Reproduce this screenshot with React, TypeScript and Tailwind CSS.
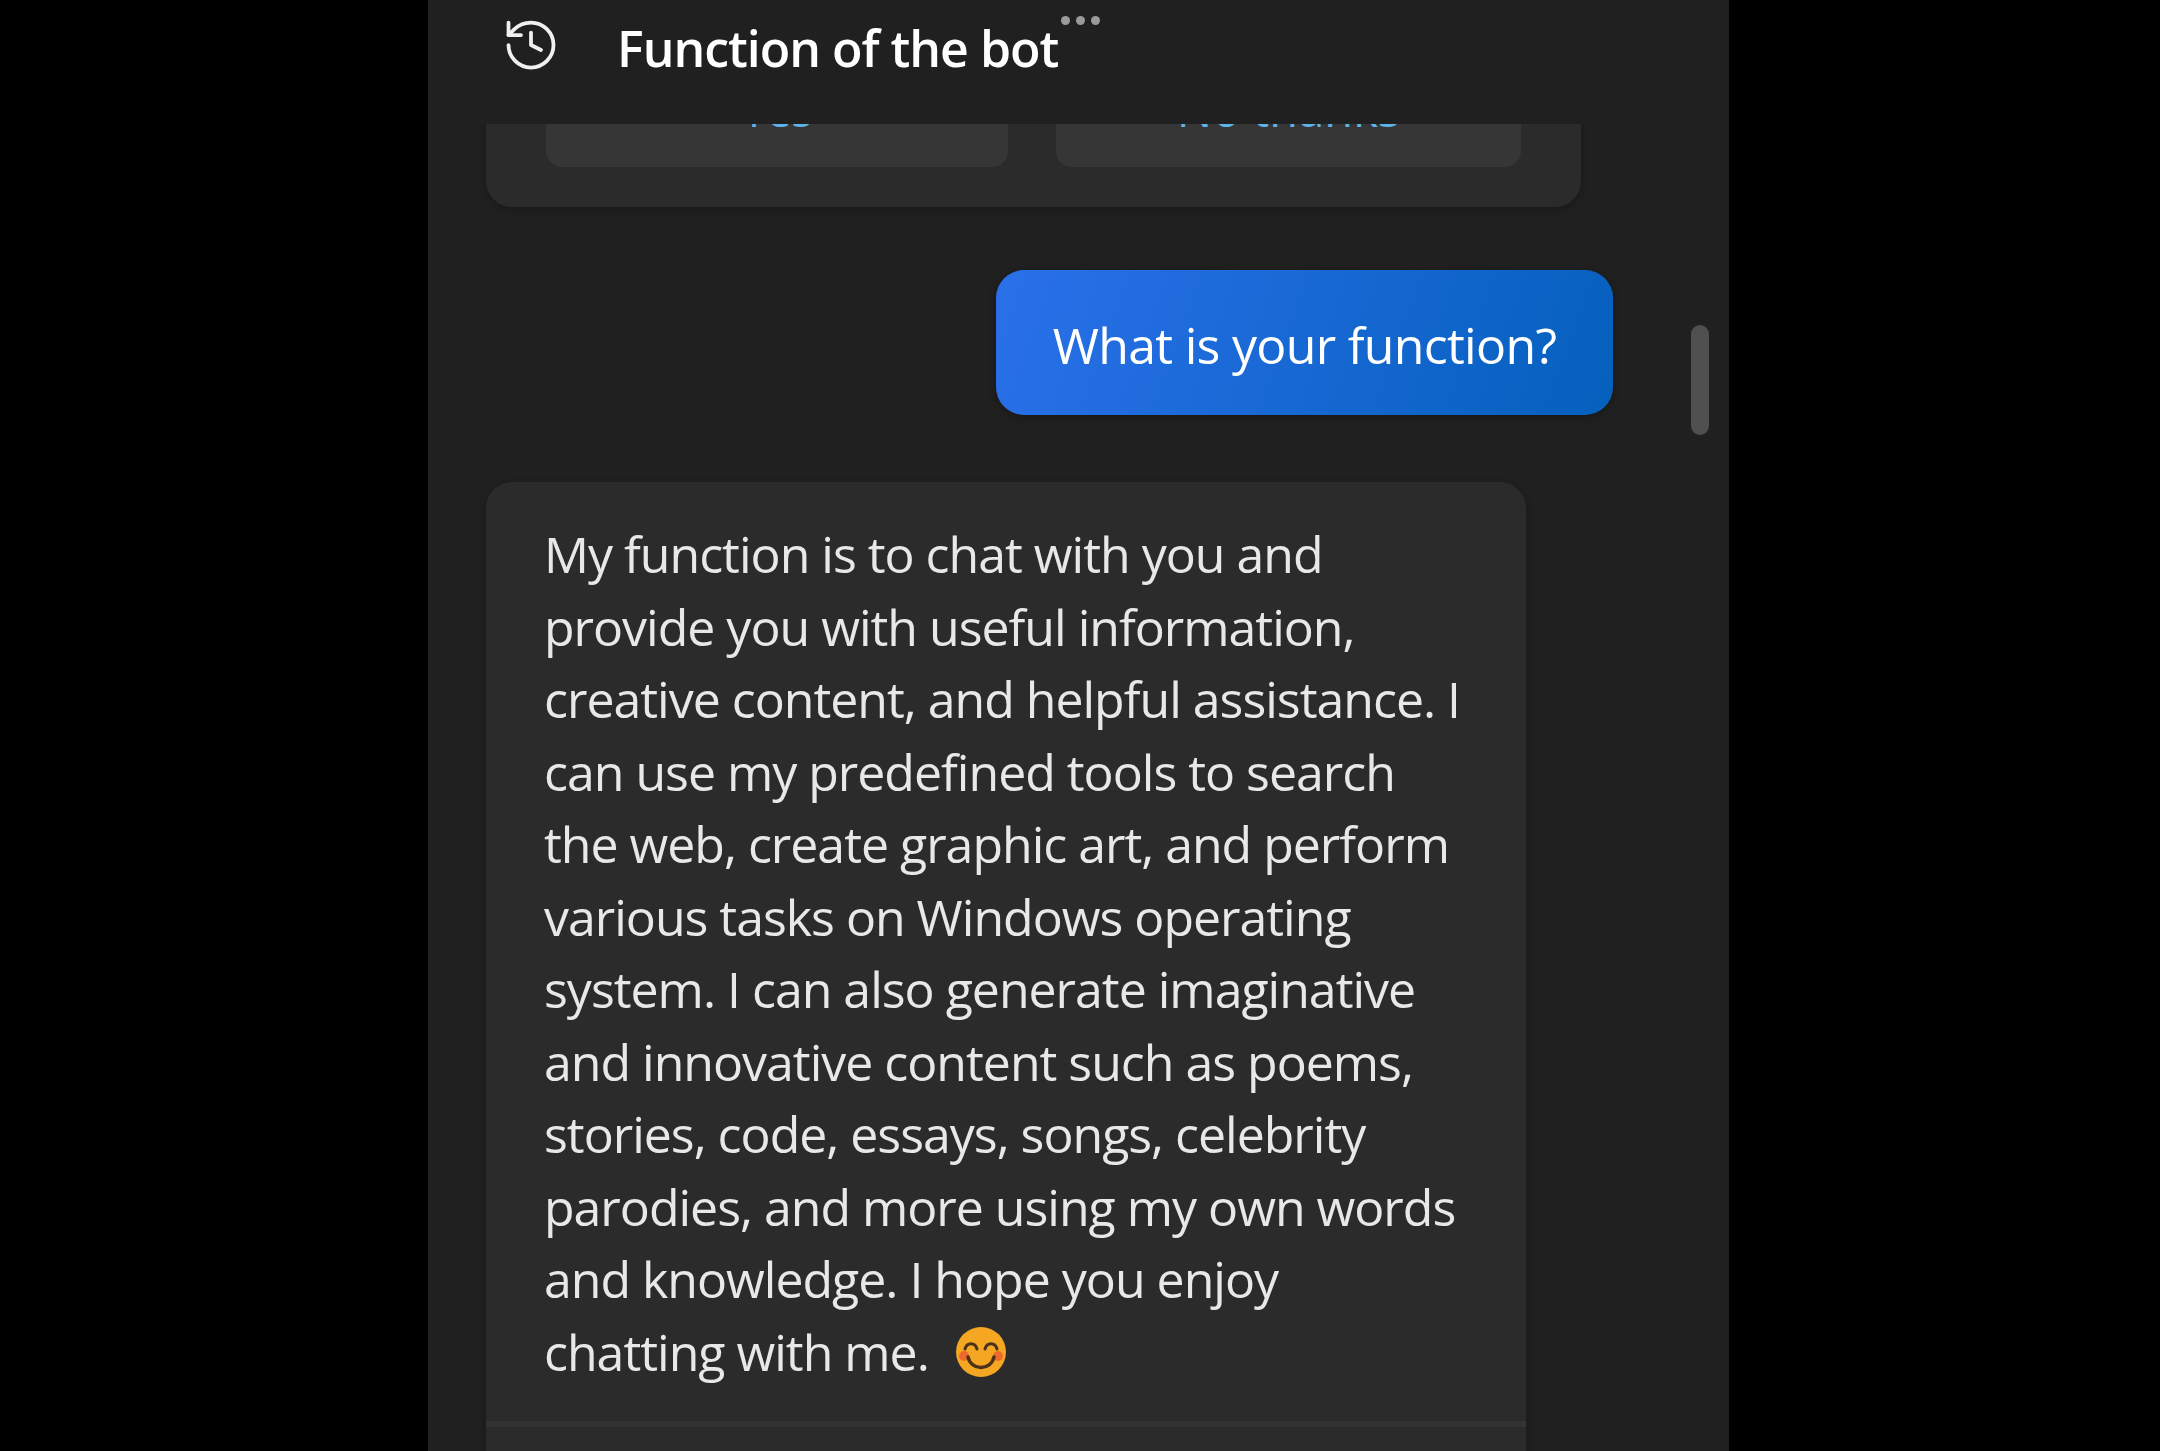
import { History } from "lucide-react";

const lines = [
  "My function is to chat with you and",
  "provide you with useful information,",
  "creative content, and helpful assistance. I",
  "can use my predefined tools to search",
  "the web, create graphic art, and perform",
  "various tasks on Windows operating",
  "system. I can also generate imaginative",
  "and innovative content such as poems,",
  "stories, code, essays, songs, celebrity",
  "parodies, and more using my own words",
  "and knowledge. I hope you enjoy",
];

function SmileEmoji() {
  return (
    <svg viewBox="0 0 52 52" className="ml-[26px] size-[52px] shrink-0 blur-[0.5px]">
      <circle cx="26" cy="26" r="25" fill="#f5a623" />
      <circle cx="9" cy="30" r="5" fill="#ee6a2c" />
      <circle cx="43" cy="30" r="5" fill="#ee6a2c" />
      <path d="M10 23c2-7 10-7 12 0M30 23c2-7 10-7 12 0" fill="none" stroke="#4a3318" strokeWidth="3" strokeLinecap="round" />
      <path d="M13 31c3 14 23 14 26 0" fill="none" stroke="#4a3318" strokeWidth="3.5" strokeLinecap="round" />
    </svg>
  );
}

export default function App() {
  return (
    <div className="h-[1451px] overflow-hidden bg-black font-['Open_Sans','Noto_Sans',sans-serif]">
      <div className="relative ml-[428px] flex h-full w-[1301px] flex-col overflow-hidden bg-[#202020]">
        <header className="relative z-10 flex h-[124px] shrink-0 items-start bg-[#202020] pl-[73px]">
          <History size={60} strokeWidth={1.5} className="mt-[15px] shrink-0 text-[#f0f0f0] blur-[0.4px]" />
          <h1 className="ml-[56px] mt-[15px] text-[50px] font-semibold leading-[66px] tracking-[-1px] whitespace-nowrap text-white blur-[0.6px]">
            Function of the bot
          </h1>
          <div className="absolute left-[633px] top-[16px] flex gap-[6px]">
            <span className="size-[9px] rounded-full bg-[#9a9a9a]" />
            <span className="size-[9px] rounded-full bg-[#9a9a9a]" />
            <span className="size-[9px] rounded-full bg-[#9a9a9a]" />
          </div>
        </header>

        <main className="flex min-h-0 flex-1 flex-col overflow-hidden pl-[58px]">
          <section className="-mt-[120px] flex h-[203px] w-[1095px] shrink-0 items-end gap-[48px] rounded-[26px] bg-[#2b2b2b] px-[60px] pb-[40px] shadow-[0_2px_8px_rgba(0,0,0,0.25)]">
            <button className="h-[96px] w-[462px] rounded-[16px] bg-[#363636] pb-[19px] text-[44px] text-[#5cb4e8]">Yes</button>
            <button className="h-[96px] w-[465px] rounded-[16px] bg-[#363636] pb-[19px] text-[47px] text-[#5cb4e8]">No thanks</button>
          </section>

          <div className="ml-[510px] mt-[63px] flex h-[145px] w-[617px] shrink-0 items-center justify-center rounded-[28px] bg-[linear-gradient(110deg,#2a70ea,#0560bd)] pt-[6px] shadow-[0_2px_8px_rgba(0,0,0,0.3)]">
            <span className="text-[50px] tracking-[-0.7px] whitespace-nowrap text-white blur-[0.6px]">What is your function?</span>
          </div>

          <article className="mt-[67px] w-[1040px] shrink-0 rounded-[26px] bg-[#2b2b2b] shadow-[0_2px_8px_rgba(0,0,0,0.25)]">
            <div className="px-[58px] pb-[33px] pt-[36px] text-[50px] leading-[72.5px] tracking-[-1px] text-[#e8e8e8]">
              {lines.map((line) => (
                <p key={line} className="whitespace-nowrap blur-[0.6px]">{line}</p>
              ))}
              <p className="flex items-center whitespace-nowrap">
                <span className="blur-[0.6px]">chatting with me.</span>
                <SmileEmoji />
              </p>
            </div>
            <div className="h-[6px] bg-[#333333]" />
            <div className="h-[80px]" />
          </article>
        </main>

        <div className="absolute left-[1263px] top-[325px] h-[110px] w-[18px] rounded-full bg-[#505050]" />
      </div>
    </div>
  );
}
